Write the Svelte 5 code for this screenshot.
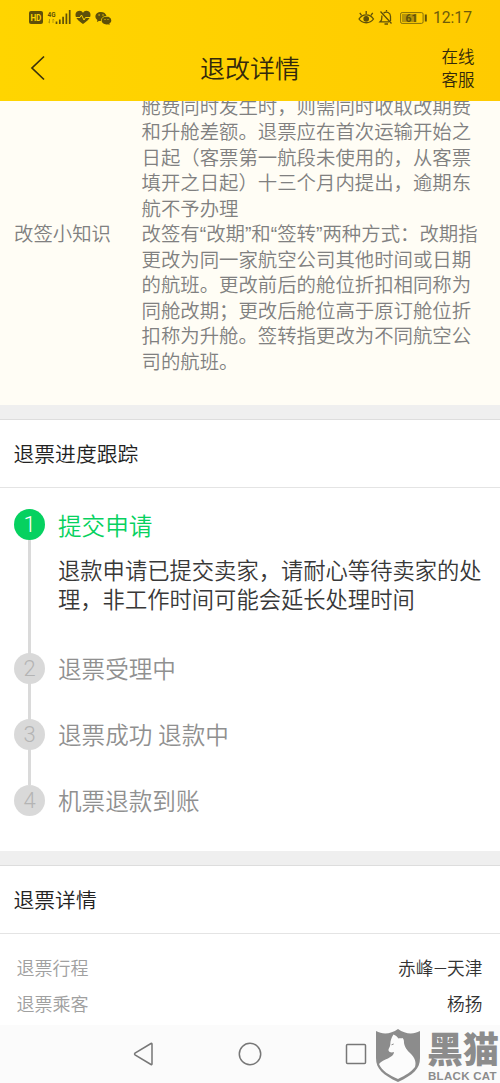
<script lang="ts">
	type Step = { title: string; done?: boolean; lines?: string[] };

	const rules = [
		{
			label: '',
			lines: [
				'舱费同时发生时，则需同时收取改期费',
				'和升舱差额。退票应在首次运输开始之',
				'日起（客票第一航段未使用的，从客票',
				'填开之日起）十三个月内提出，逾期东',
				'航不予办理'
			]
		},
		{
			label: '改签小知识',
			lines: [
				'改签有“改期”和“签转”两种方式：改期指',
				'更改为同一家航空公司其他时间或日期',
				'的航班。更改前后的舱位折扣相同称为',
				'同舱改期；更改后舱位高于原订舱位折',
				'扣称为升舱。签转指更改为不同航空公',
				'司的航班。'
			]
		}
	];

	const steps: Step[] = [
		{
			title: '提交申请',
			done: true,
			lines: ['退款申请已提交卖家，请耐心等待卖家的处', '理，非工作时间可能会延长处理时间']
		},
		{ title: '退票受理中' },
		{ title: '退票成功 退款中' },
		{ title: '机票退款到账' }
	];

	const details = [
		{ label: '退票行程', value: '赤峰—天津' },
		{ label: '退票乘客', value: '杨扬' }
	];
</script>

<div class="screen">
	<header>
		<div class="status">
			<svg class="status-left" width="84" height="18" viewBox="0 0 84 18">
				<rect x="1" y="2" width="14" height="13" rx="2" fill="#5f5009" />
				<text x="2.4" y="12" class="hd" textLength="11" lengthAdjust="spacingAndGlyphs">HD</text>
				<text x="19.500" y="7.500" class="net" textLength="8" lengthAdjust="spacingAndGlyphs">4G</text>
				<path d="M21.5 10v4m-1.300-1.200 1.300 1.200M25 14v-4m1.300 1.200L25 10" stroke="#b79a08" fill="none" />
				<path
					d="M28.500 12.500v2.500M31.800 10.500v4.500M35.100 7.700v7.300M38.400 4.500v10.500M41.700 1v14"
					stroke="#5f5009"
					stroke-width="1.700"
				/>
				<path
					d="M55 15C50 11.500 47.500 9 47.500 6a4 4 0 0 1 7.500-2.200A4 4 0 0 1 62.500 6c0 3-2.500 5.500-7.500 9z"
					fill="#5f5009"
				/>
				<path d="M47 8.500h5l1.500-2.500 2.500 5 1.500-2.500H63" stroke="#ffd300" fill="none" />
				<path
					d="M73 3c-3.300 0-5.600 2-5.600 4.600 0 1.500.8 2.700 2 3.500l-.5 1.800 2-1c.7.2 1.300.2 2 .2 0-3 2.500-5 5.600-5C78 4.600 75.700 3 73 3z"
					fill="#5f5009"
				/>
				<path
					d="M78.500 7.600c-2.800 0-4.900 1.700-4.900 3.900s2 3.900 4.900 3.900c.5 0 1-.1 1.500-.2l1.700.9-.4-1.500c1.200-.8 2-1.800 2-3.100 0-2.200-2-3.900-4.800-3.900z"
					fill="#5f5009"
				/>
				<g fill="#ffd300">
					<circle cx="71.100" cy="6" r=".7" />
					<circle cx="75" cy="6" r=".7" />
					<circle cx="77" cy="10.500" r=".6" />
					<circle cx="80" cy="10.500" r=".6" />
				</g>
			</svg>
			<svg width="70" height="18" viewBox="0 0 70 18" fill="none" stroke="#5f5009" stroke-width="1.300">
				<path d="M1 10c3.500-5.500 11-5.500 14.500 0-3.500 5-11 5-14.500 0z" />
				<path d="M8.200 5V2M3.500 6.300 1.800 3.800M13 6.300l1.700-2.500" />
				<circle cx="8.200" cy="9.800" r="2.200" fill="#5f5009" />
				<path d="M25.500 4.200c3-2.400 7-.5 7 3.300v4.500M24 6.500c-.3 1 0 4-.8 5l-1.200 1.300h9" />
				<path d="m22.500 2.500 11 12M28.500 2.500V1M26.500 15h3.500" />
				<rect x="42.600" y="3.600" width="22.500" height="10.800" rx="1.500" stroke="#867009" stroke-width="1" />
				<rect x="44" y="5" width="14.500" height="8" fill="#b69508" stroke="none" />
				<path d="M67.800 5.500v7" stroke-width="2" />
				<text x="47.500" y="12.700" class="battery" textLength="12" lengthAdjust="spacingAndGlyphs">61</text>
			</svg>
			<time>12:17</time>
		</div>
		<div class="nav">
			<svg class="back" width="16" height="26" viewBox="0 0 16 26">
				<path d="M14 1.500 2 13l12 11.500" fill="none" stroke="#3b320c" stroke-width="1.700" />
			</svg>
			<h1>退改详情</h1>
			<div class="service"><span>在线</span><span>客服</span></div>
		</div>
	</header>

	<section class="rules">
		{#each rules as rule}
			<div class="rule">
				<div class="rule-label">{rule.label}</div>
				<div>
					{#each rule.lines as line}
						<div class="rule-line">{line}</div>
					{/each}
				</div>
			</div>
		{/each}
	</section>

	<section class="card progress">
		<h2>退票进度跟踪</h2>
		<ol>
			{#each steps as step, i}
				<li class:done={step.done}>
					<div class="rail"><span class="dot">{i + 1}</span></div>
					<div class="step-body">
						<h3>{step.title}</h3>
						{#if step.lines}
							<div class="message">
								{#each step.lines as line}
									<div>{line}</div>
								{/each}
							</div>
						{/if}
					</div>
				</li>
			{/each}
		</ol>
	</section>

	<section class="card">
		<h2>退票详情</h2>
		<dl>
			{#each details as item}
				<div class="detail">
					<dt>{item.label}</dt>
					<dd>{item.value}</dd>
				</div>
			{/each}
		</dl>
	</section>

	<footer>
		<svg width="24" height="24" viewBox="0 0 24 24">
			<path d="M20 2v20q0 1-1 .5L3 13q-1-1 0-2L19 1.500q1-.5 1 .5z" />
		</svg>
		<svg width="24" height="24" viewBox="0 0 24 24"><circle cx="12" cy="12" r="10.700" /></svg>
		<svg width="24" height="24" viewBox="0 0 24 24">
			<rect x="2.500" y="2.500" width="19" height="19" rx="1" />
		</svg>
	</footer>

	<div class="watermark">
		<svg width="46" height="54" viewBox="0 0 46 54">
			<path
				d="M1 2c7 4 15 3 22-2 7 5 15 6 22 2v27c0 11-7 17-22 24C8 46 1 40 1 29z"
				fill="#8c8c8c"
			/>
			<path
				d="M18.500 5.500c2 .8 3.700 2.200 5 4 1.300-.3 2.700 0 4-.5 1.500 1 1.500 3 1.500 5 1 5 3 7 6 10 5 5 6.500 9 5 14-4 5-9 8-17 12C14 46 7 42 4 35c4-5 15-6 15-12-2 1-5 .5-5.500-1.500-.4-2 1.500-3 1.800-6 0-4 1.200-7 3.200-10z"
				fill="#fcfcfc"
			/>
			<path d="m16.500 15.800 2.200-.8" stroke="#8c8c8c" stroke-width="1" />
		</svg>
		<div class="brand">
			<span class="brand-cn">黑猫</span>
			<span class="brand-en">BLACK CAT</span>
		</div>
	</div>
</div>

<style>
	:global(body) {
		margin: 0;
		background: #fff;
	}

	.screen {
		position: relative;
		display: flex;
		flex-direction: column;
		width: 500px;
		height: 1083px;
		overflow: hidden;
		font-family: Roboto, 'Noto Sans CJK SC', sans-serif;
		font-weight: 350;
		color: #333;
		white-space: nowrap;
	}

	h1,
	h2,
	h3,
	ol,
	dl,
	dd {
		margin: 0;
		padding: 0;
		font-weight: 350;
	}

	header {
		flex: none;
		height: 101px;
		background: linear-gradient(90deg, #ffd500, #ffcb00);
	}

	.status {
		display: flex;
		align-items: center;
		height: 35px;
		box-sizing: border-box;
		padding: 0 28px;
	}

	.status-left {
		margin-right: auto;
	}

	.status text {
		stroke: none;
		font-weight: 700;
	}

	.hd {
		font-size: 9px;
		fill: #ffd300;
	}

	.net {
		font-size: 8px;
		fill: #5f5009;
	}

	.battery {
		font-size: 10px;
		fill: #5f5009;
	}

	time {
		width: 41px;
		margin-left: 3px;
		font-size: 15.7px;
		font-weight: 400;
		color: #6e5b0b;
		text-align: right;
	}

	.nav {
		display: grid;
		grid-template-columns: 60px 1fr 60px;
		align-items: center;
		height: 66px;
		padding: 0 12px 0 30px;
	}

	h1 {
		padding-top: 3px;
		font-size: 25px;
		line-height: 63px;
		color: #33290c;
		text-align: center;
		text-indent: -18px;
	}

	.service {
		display: flex;
		flex-direction: column;
		padding: 2px 0 0 13.500px;
		font-size: 16.5px;
		line-height: 23px;
		color: #33290c;
	}

	.rules {
		flex: none;
		display: flex;
		flex-direction: column;
		justify-content: flex-end;
		height: 304px;
		box-sizing: border-box;
		padding: 0 0 30px 14px;
		overflow: hidden;
		background: #fffdf5;
		color: #808080;
	}

	.rule {
		display: flex;
		font-family: 'Liberation Sans', 'Noto Sans CJK SC', sans-serif;
		font-size: 19.4px;
		line-height: 25.5px;
	}

	.rule-label {
		width: 127.500px;
	}

	.rule-line {
		height: 25.5px;
	}

	.card {
		flex: none;
		border-top: 14px solid #efefef;
		background: #fff;
	}

	h2 {
		height: 67px;
		padding-left: 13.500px;
		border-top: 1px solid #ddd;
		border-bottom: 1px solid #e4e4e4;
		font-size: 20.8px;
		line-height: 70px;
		color: #222;
	}

	.progress {
		height: 432px;
	}

	ol {
		padding: 21px 14px 0;
		list-style: none;
	}

	li {
		display: flex;
		height: 66px;
	}

	li.done {
		height: 144px;
	}

	.rail {
		width: 44px;
		background: linear-gradient(#dadada, #dadada) 14px 0 / 3px 100% no-repeat;
	}

	li:last-child .rail {
		background: none;
	}

	.dot {
		display: block;
		width: 31px;
		height: 31px;
		border-radius: 50%;
		background: #d9d9d9;
		font-size: 22px;
		font-weight: 300;
		line-height: 31px;
		color: #b4b4b4;
		text-align: center;
	}

	.done .dot {
		background: #06d160;
		color: #fff;
	}

	h3 {
		font-size: 23.6px;
		line-height: 35px;
		color: #909090;
	}

	.done h3 {
		line-height: 36px;
		color: #06d160;
	}

	.message {
		margin-top: 12px;
		font-size: 22.3px;
		line-height: 29px;
		color: #383838;
	}

	dl {
		padding: 17px 17.500px 0 16.500px;
	}

	.detail {
		display: flex;
		justify-content: space-between;
		font-size: 18px;
		line-height: 36px;
	}

	dt {
		color: #a0a0a0;
	}

	dd {
		font-size: 17.7px;
	}

	footer {
		display: flex;
		align-items: center;
		justify-content: space-between;
		height: 58px;
		box-sizing: border-box;
		margin-top: auto;
		padding: 0 132px;
		background: #fbfbfb;
	}

	footer svg {
		fill: none;
		stroke: #777;
		stroke-width: 1.500;
	}

	.watermark {
		position: absolute;
		left: 375px;
		top: 1029px;
		display: flex;
		color: #8c8c8c;
	}

	.brand {
		display: flex;
		flex-direction: column;
		padding: 4px 0 0 6px;
	}

	.brand-cn {
		font-size: 36px;
		font-weight: 900;
		line-height: 37px;
	}

	.brand-en {
		padding-left: 1px;
		font-family: 'Liberation Sans', sans-serif;
		font-size: 11.500px;
		font-weight: 700;
		line-height: 12px;
		letter-spacing: 0.3px;
	}
</style>
